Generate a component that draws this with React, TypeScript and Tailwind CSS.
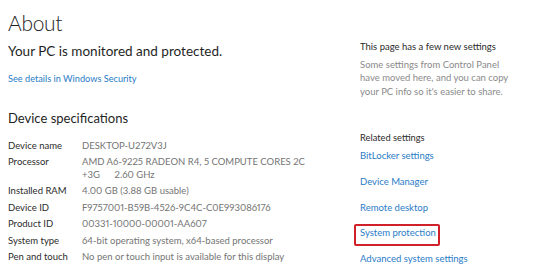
const specs: { label: string; value: string }[] = [
  { label: 'Device name', value: 'DESKTOP-U272V3J' },
  {
    label: 'Processor',
    value: 'AMD A6-9225 RADEON R4, 5 COMPUTE CORES 2C +3G\u00a0\u00a0\u00a0\u00a0\u00a0\u00a02.60 GHz',
  },
  { label: 'Installed RAM', value: '4.00 GB (3.88 GB usable)' },
  { label: 'Device ID', value: 'F9757001-B59B-4526-9C4C-C0E993086176' },
  { label: 'Product ID', value: '00331-10000-00001-AA607' },
  { label: 'System type', value: '64-bit operating system, x64-based processor' },
  { label: 'Pen and touch', value: 'No pen or touch input is available for this display' },
];

const related = ['BitLocker settings', 'Device Manager', 'Remote desktop', 'System protection', 'Advanced system settings'];

export default function App() {
  return (
    <div
      className="w-[550px] h-[273px] overflow-hidden bg-white flex proportional-nums"
      style={{ fontFamily: 'Lato, "Noto Sans", sans-serif' }}
    >
      {/* Left column */}
      <div className="w-[360px] shrink-0 pl-2 pt-[9px]">
        <h1 className="text-[21px] leading-[28px] font-light tracking-[-0.3px] text-[#1f1f1f]">About</h1>
        <p className="mt-[4.5px] text-[13.5px] leading-[18px] text-[#1f1f1f]">Your PC is monitored and protected.</p>
        <a className="block mt-[12.5px] text-[9.2px] leading-[14px] text-[#2a7cc7]">See details in Windows Security</a>

        <h2 className="mt-[22.5px] text-[13px] leading-[18px] text-[#1f1f1f]">Device specifications</h2>
        <div className="mt-[13px] flex flex-col gap-[4px]">
          {specs.map((s) => (
            <div key={s.label} className="flex leading-[12.5px]">
              <div className="w-[74px] shrink-0 text-[9.5px] text-[#2b2b2b]">{s.label}</div>
              <div className="w-[240px] text-[9.5px] text-[#747474]">{s.value}</div>
            </div>
          ))}
        </div>
      </div>

      {/* Right column */}
      <div className="pt-[39.5px] w-[170px]">
        <div className="text-[9.5px] leading-[13.5px] text-[#2b2b2b]">This page has a few new settings</div>
        <p className="mt-[4.5px] w-[152px] text-[9.5px] leading-[13.5px] text-[#8a8a8a]">
          Some settings from Control Panel have moved here, and you can copy your PC info so it's easier to share.
        </p>

        <div className="mt-[33px] text-[9.3px] leading-[14px] text-[#2b2b2b]">Related settings</div>
        <div className="mt-[4px] flex flex-col">
          {related.map((r) => (
            <div key={r} className="relative h-[25.75px]">
              <span className="block text-[9.5px] leading-[14px] text-[#2a7cc7] whitespace-nowrap">{r}</span>
              {r === 'System protection' && (
                <div className="absolute -left-[6px] -top-[2.5px] w-[86px] h-[22px] border-2 border-[#d0212b] rounded-[2px]" />
              )}
            </div>
          ))}
        </div>
      </div>
    </div>
  );
}
